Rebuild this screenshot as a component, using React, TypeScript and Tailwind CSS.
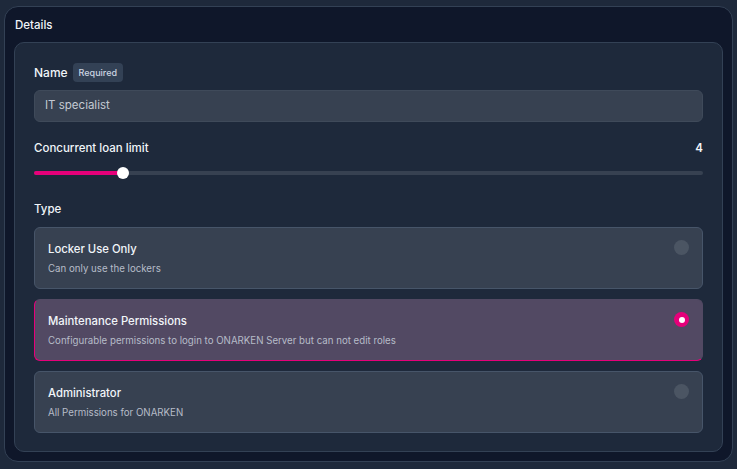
import React from "react";

type RoleOption = {
  title: string;
  description: string;
  selected?: boolean;
};

const roles: RoleOption[] = [
  { title: "Locker Use Only", description: "Can only use the lockers" },
  {
    title: "Maintenance Permissions",
    description: "Configurable permissions to login to ONARKEN Server but can not edit roles",
    selected: true,
  },
  { title: "Administrator", description: "All Permissions for ONARKEN" },
];

function RoleCard({ role }: { role: RoleOption }) {
  return (
    <div
      className={
        role.selected
          ? "relative h-[62px] rounded-[6px] border border-[#e6007a] border-t-[#524963] border-r-[#524963] bg-[#524963] px-[13px] pt-[13px]"
          : "relative h-[62px] rounded-[6px] border border-[#475569] bg-[#374151] px-[13px] pt-[13px]"
      }
    >
      <div className="text-[11.3px] leading-[16px] font-medium text-[#f1f5f9]">{role.title}</div>
      <div className="mt-[5px] text-[9.7px] leading-[14px] text-[#b6bcc8]">{role.description}</div>
      <div className="absolute right-[13px] top-[12px]">
        {role.selected ? (
          <div className="flex h-[15px] w-[15px] items-center justify-center rounded-full bg-[#e6007a]">
            <div className="h-[6px] w-[6px] rounded-full bg-white" />
          </div>
        ) : (
          <div className="h-[15px] w-[15px] rounded-full bg-[#4b5563]" />
        )}
      </div>
    </div>
  );
}

export default function App() {
  const value = 4;
  const max = 30;
  const pct = (value / max) * 100;

  return (
    <div
      className="h-[469px] w-[737px] bg-[#1e293b] pl-[4px] pr-[4px] pt-[6px] pb-[7px]"
      style={{ fontFamily: "Inter, 'Noto Sans', sans-serif" }}
    >
      <div className="flex h-full flex-col rounded-[14px] border border-[#334155] bg-[#0f172a] px-[9px] pb-[9px]">
        <div className="flex h-[35px] items-center pl-[1px] pt-[3px] text-[11.5px] font-medium text-[#f1f5f9]">
          Details
        </div>
        <div className="flex-1 rounded-[10px] border border-[#334155] bg-[#1e293b] px-[19px] pt-[20px]">
          <div className="flex h-[19px] items-center gap-[5px]">
            <span className="text-[12px] font-medium text-[#f1f5f9]">Name</span>
            <span className="flex h-[19px] items-center rounded-[4px] bg-[#334155] px-[6px] text-[9px] font-medium text-[#cbd5e1]">
              Required
            </span>
          </div>
          <div className="mt-[8px] flex h-[32px] items-center rounded-[6px] border border-[#3f4a5a] bg-[#374151] px-[10px] text-[11.5px] text-[#c3c9d3]">
            IT specialist
          </div>

          <div className="mt-[19px] flex h-[16px] items-center justify-between">
            <span className="text-[11.5px] font-medium text-[#f1f5f9]">Concurrent loan limit</span>
            <span className="text-[11.5px] font-semibold text-[#f1f5f9]">{value}</span>
          </div>
          <div className="relative mt-[10px] h-[12px]">
            <div className="absolute left-0 right-0 top-[4px] h-[4px] rounded-full bg-[#374151]" />
            <div
              className="absolute left-0 top-[4px] h-[4px] rounded-full bg-[#e6007a]"
              style={{ width: `${pct}%` }}
            />
            <div
              className="absolute top-0 h-[12px] w-[12px] -translate-x-1/2 rounded-full bg-white"
              style={{ left: `${pct}%` }}
            />
          </div>

          <div className="mt-[23px] flex h-[16px] items-center text-[11.5px] font-medium text-[#f1f5f9]">
            Type
          </div>
          <div className="mt-[9px] flex flex-col gap-[10px]">
            {roles.map((r) => (
              <RoleCard key={r.title} role={r} />
            ))}
          </div>
        </div>
      </div>
    </div>
  );
}
